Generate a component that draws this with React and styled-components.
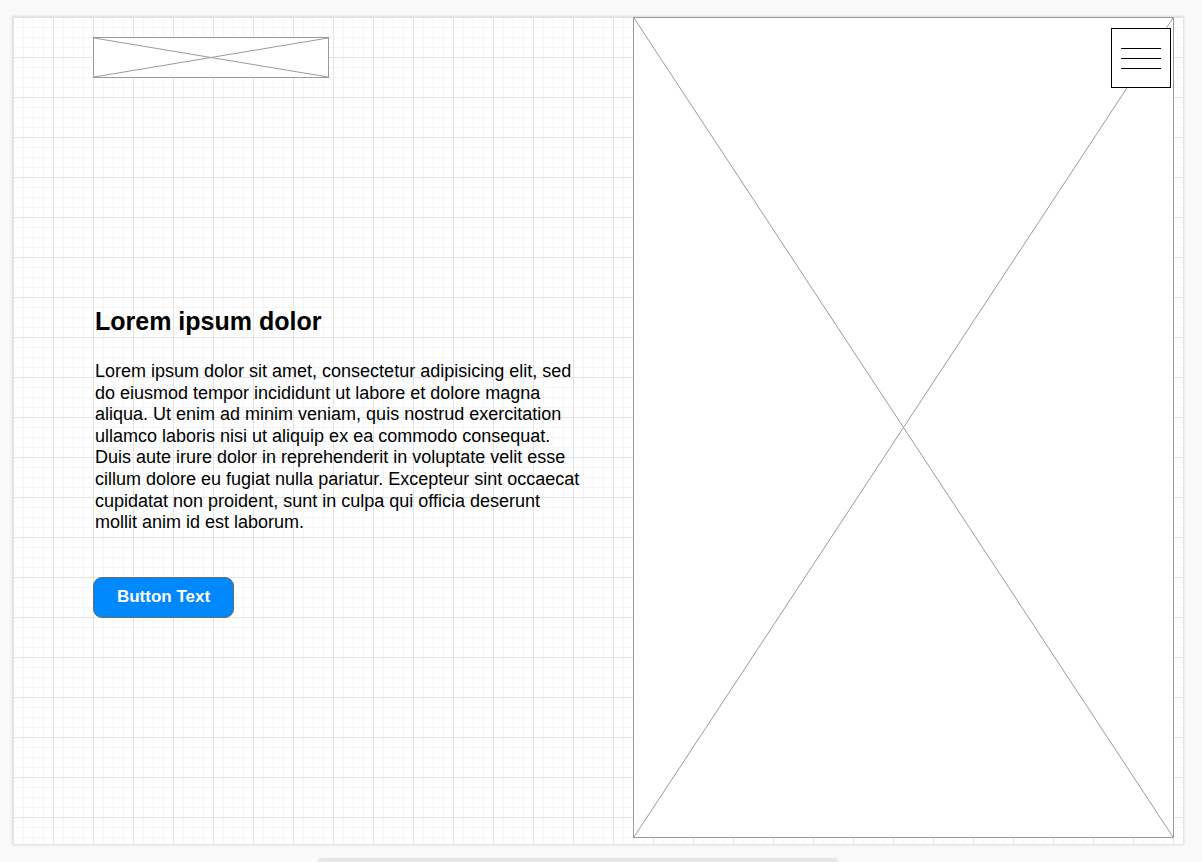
import styled, { createGlobalStyle } from "styled-components";

const GlobalStyle = createGlobalStyle`
  html, body {
    margin: 0;
    padding: 0;
    height: 100%;
    overflow: hidden;
    background: #f9f9f9;
    font-family: "Liberation Sans", Arial, sans-serif;
  }
`;

const Page = styled.div`
  width: 1202px;
  height: 862px;
  padding: 17px 0 0 13px;
  box-sizing: border-box;
`;

const Canvas = styled.div`
  display: flex;
  width: 1170px;
  height: 827px;
  background-color: #fff;
  background-image:
    linear-gradient(to right, #e3e3e3 1px, transparent 1px),
    linear-gradient(to bottom, #e3e3e3 1px, transparent 1px),
    linear-gradient(to right, #f5f5f5 1px, transparent 1px),
    linear-gradient(to bottom, #f5f5f5 1px, transparent 1px);
  background-size: 40px 40px, 40px 40px, 10px 10px, 10px 10px;
  box-shadow: 0 0 2px 1px rgba(0, 0, 0, 0.12);
`;

const LeftColumn = styled.div`
  width: 620px;
  box-sizing: border-box;
  padding: 20px 0 0 80px;
  display: flex;
  flex-direction: column;
  align-items: flex-start;
`;

const PlaceholderBox = styled.div`
  position: relative;
  width: ${(p) => p.$w}px;
  height: ${(p) => p.$h}px;
  box-sizing: border-box;
  border: 1px solid #9a9a9a;
  background: #fff;
  flex-shrink: 0;

  svg {
    display: block;
    width: 100%;
    height: 100%;
  }
`;

const Heading = styled.h1`
  margin: 228px 0 0 2px;
  font-size: 25px;
  line-height: 30px;
  font-weight: bold;
  color: #000;
`;

const Paragraph = styled.p`
  margin: 25px 0 0 2px;
  width: 490px;
  font-size: 18px;
  line-height: 21.6px;
  color: #000;
`;

const Button = styled.button`
  margin-top: 43px;
  width: 141px;
  height: 41px;
  border: 1px solid #6b6b6b;
  border-radius: 9px;
  background: #0088ff;
  color: #fff;
  font-family: "Liberation Sans", Arial, sans-serif;
  font-size: 17px;
  font-weight: bold;
  cursor: pointer;
`;

const MenuButton = styled.div`
  position: absolute;
  top: 10px;
  right: 2px;
  width: 60px;
  height: 60px;
  box-sizing: border-box;
  border: 1px solid #000;
  background: #fff;
  display: flex;
  flex-direction: column;
  align-items: center;
  padding-top: 19px;
  gap: 9px;
`;

const MenuLine = styled.span`
  display: block;
  width: 40px;
  height: 1px;
  background: #000;
`;

const Scrollbar = styled.div`
  margin: 14px 0 0 305px;
  width: 520px;
  height: 8px;
  border-radius: 4px;
  background: #e6e6e6;
`;

function Cross() {
  return (
    <svg viewBox="0 0 100 100" preserveAspectRatio="none">
      <line x1="0" y1="0" x2="100" y2="100" stroke="#9a9a9a" strokeWidth="1" vectorEffect="non-scaling-stroke" />
      <line x1="100" y1="0" x2="0" y2="100" stroke="#9a9a9a" strokeWidth="1" vectorEffect="non-scaling-stroke" />
    </svg>
  );
}

export default function App() {
  return (
    <Page>
      <GlobalStyle />
      <Canvas>
        <LeftColumn>
          <PlaceholderBox $w={236} $h={41}>
            <Cross />
          </PlaceholderBox>
          <Heading>Lorem ipsum dolor</Heading>
          <Paragraph>
            Lorem ipsum dolor sit amet, consectetur adipisicing elit, sed do
            eiusmod tempor incididunt ut labore et dolore magna aliqua. Ut enim
            ad minim veniam, quis nostrud exercitation ullamco laboris nisi ut
            aliquip ex ea commodo consequat. Duis aute irure dolor in
            reprehenderit in voluptate velit esse cillum dolore eu fugiat nulla
            pariatur. Excepteur sint occaecat cupidatat non proident, sunt in
            culpa qui officia deserunt mollit anim id est laborum.
          </Paragraph>
          <Button>Button Text</Button>
        </LeftColumn>
        <PlaceholderBox $w={541} $h={821}>
          <Cross />
          <MenuButton>
            <MenuLine />
            <MenuLine />
            <MenuLine />
          </MenuButton>
        </PlaceholderBox>
      </Canvas>
      <Scrollbar />
    </Page>
  );
}
